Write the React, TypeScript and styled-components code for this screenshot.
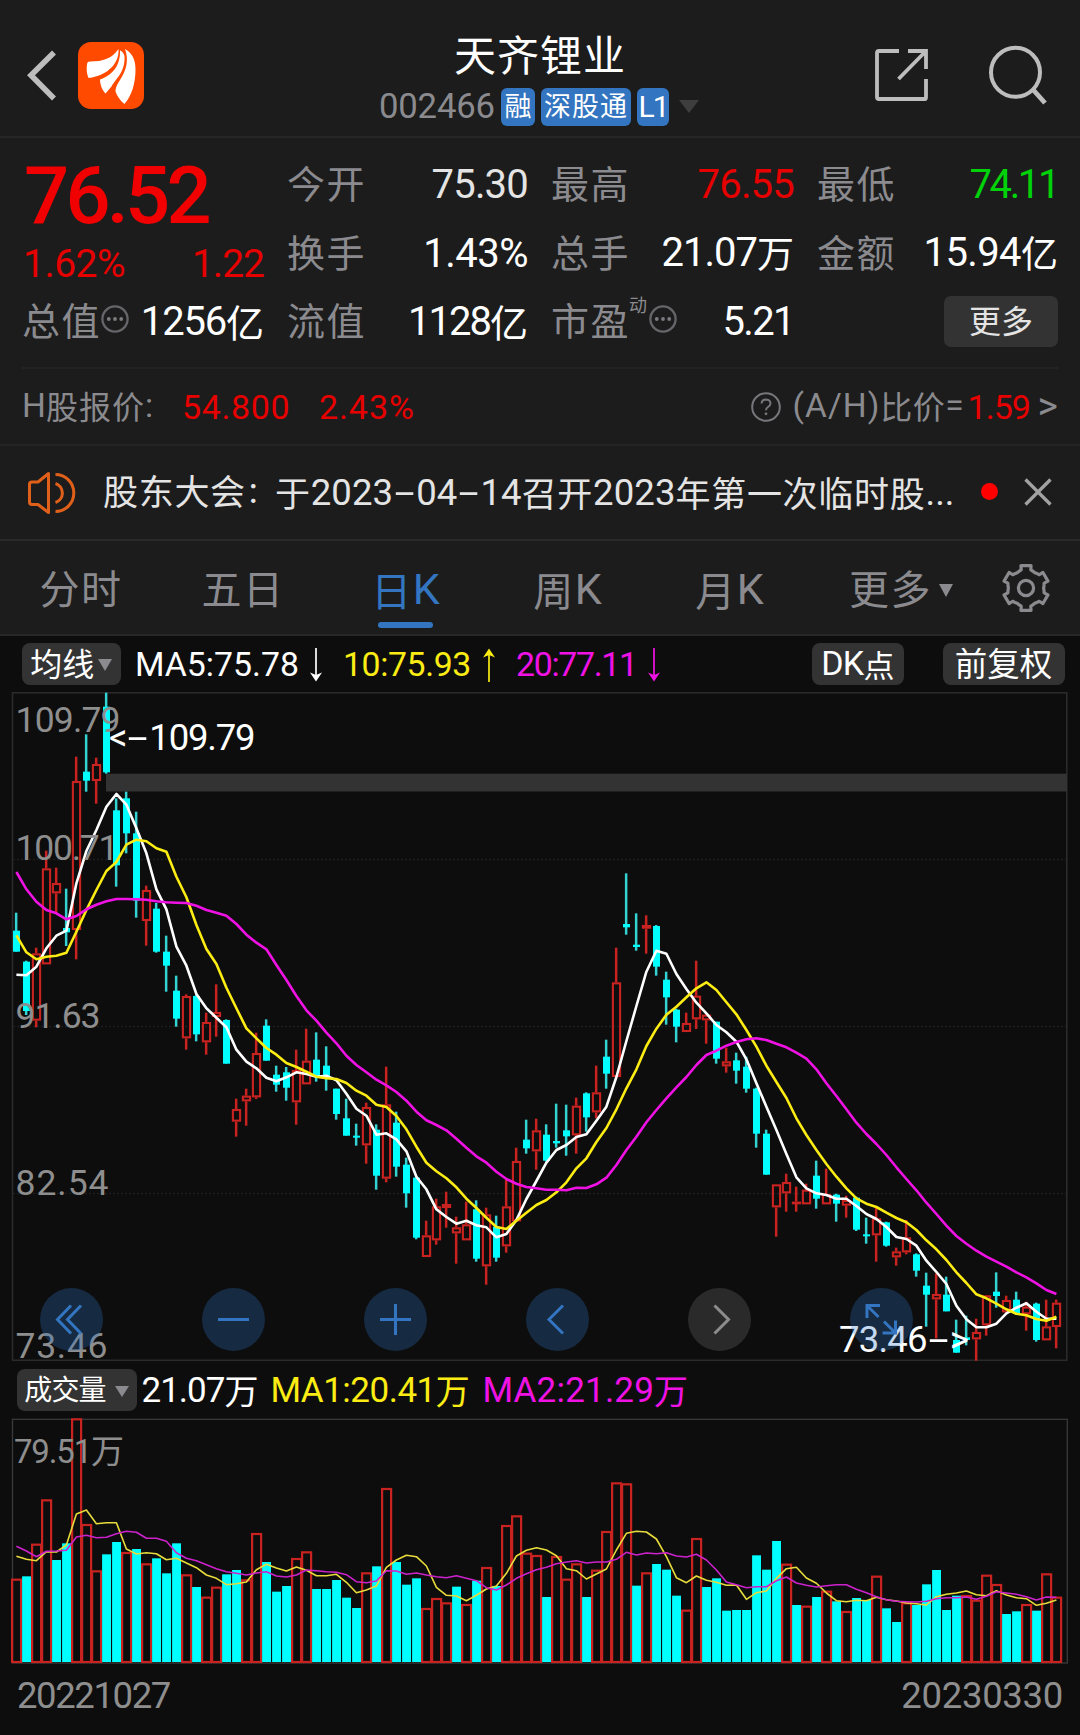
import React from "react";
import styled, { createGlobalStyle } from "styled-components";

const C = {
  panel: "#1c1c1c",
  chart: "#0d0d0d",
  line: "#2b2b2b",
  gray: "#8b8b8f",
  white: "#ffffff",
  soft: "#e4e4e4",
  red: "#e60000",
  green: "#00d20a",
  blue: "#3375c0",
  yellow: "#fbec14",
  magenta: "#f012e4",
  pill: "#333333",
  up: "#c82320",
  cyan: "#00ffff",
  wick: "#35d2d2",
  axis: "#8e8e8e",
};

const Global = createGlobalStyle`
  body { margin: 0; background: ${C.chart}; }
  * { box-sizing: border-box; }
`;

const Screen = styled.div`
  width: 1080px;
  height: 1735px;
  display: flex;
  flex-direction: column;
  background: ${C.chart};
  color: ${C.white};
  font-family: Roboto, "Noto Sans CJK SC", sans-serif;
  line-height: 1;
  overflow: hidden;
  svg { display: block; flex: none; overflow: visible; }
`;

/* ---------- text made of latin and CJK runs ---------- */

const TextBox = styled.span<{ $color?: string; $w?: number; $right?: boolean; $weight?: number; $ml?: number }>`
  display: inline-block;
  flex: none;
  white-space: nowrap;
  color: ${(p) => p.$color || C.gray};
  width: ${(p) => (p.$w ? `${p.$w}px` : "auto")};
  margin-left: ${(p) => p.$ml || 0}px;
  text-align: ${(p) => (p.$right ? "right" : "left")};
  font-weight: ${(p) => p.$weight || 400};
`;
const Run = styled.span<{ $size: number; $ls: number; $drop?: boolean }>`
  font-size: ${(p) => p.$size}px;
  letter-spacing: ${(p) => p.$ls}px;
  vertical-align: ${(p) => (p.$drop ? "-1.5px" : "baseline")};
`;
const Dash = styled.span`
  display: inline-block;
  width: 23px;
  text-align: center;
  transform: scaleX(2);
  letter-spacing: 0;
`;

type TextProps = {
  t: string;
  size?: number;
  ls?: number;
  cjk?: number;
  cls?: number;
  color?: string;
  w?: number;
  ml?: number;
  right?: boolean;
  weight?: number;
};
function Txt({ t, size = 40, ls = -1, cjk = 38, cls = 1.5, color, w, ml, right, weight }: TextProps) {
  const runs = t.match(/[\u3000-\u9fff\uff00-\uffef]+|[^\u3000-\u9fff\uff00-\uffef]+/g) || [];
  return (
    <TextBox $color={color} $w={w} $right={right} $weight={weight} $ml={ml}>
      {runs.map((r, i) => {
        const han = /[\u3000-\u9fff\uff00-\uffef]/.test(r);
        return (
          <Run key={i} $size={han ? cjk : size} $ls={han ? cls : ls} $drop={han}>
            {r.split(/(-)/).map((part, k) => (part === "-" ? <Dash key={k}>-</Dash> : part))}
          </Run>
        );
      })}
    </TextBox>
  );
}

/* ---------- header ---------- */

const Header = styled.header`
  height: 138px;
  flex: none;
  display: grid;
  grid-template-columns: 300px 1fr 300px;
  background: ${C.panel};
  border-bottom: 2px solid #262626;
`;
const HeaderLeft = styled.div`
  display: flex;
  padding: 42px 0 0 26px;
  gap: 22px;
`;
const HeaderRight = styled.div`
  display: flex;
  justify-content: flex-end;
  gap: 57px;
  padding: 45px 32px 0 0;
`;
const TitleCol = styled.div`
  display: flex;
  flex-direction: column;
  align-items: center;
  padding-top: 35.5px;
`;
const CodeRow = styled.div`
  display: flex;
  align-items: center;
  height: 38px;
  margin-top: 10px;
  padding-right: 2px;
`;
const Tag = styled.span<{ $w: number; $ml: number }>`
  width: ${(p) => p.$w}px;
  height: 38px;
  margin-left: ${(p) => p.$ml}px;
  padding-top: 1px;
  display: flex;
  align-items: center;
  justify-content: center;
  border-radius: 6px;
  background: ${C.blue};
`;
const Caret = styled.i<{ $w: number; $h: number; $c: string; $ml?: number }>`
  flex: none;
  margin-left: ${(p) => p.$ml || 0}px;
  border-left: ${(p) => p.$w / 2}px solid transparent;
  border-right: ${(p) => p.$w / 2}px solid transparent;
  border-top: ${(p) => p.$h}px solid ${(p) => p.$c};
`;

/* ---------- quote ---------- */

const Quote = styled.section`
  flex: none;
  height: 229px;
  padding: 12.5px 22px 0 24px;
  display: grid;
  grid-template-columns: 240px 239px 241px 239px;
  column-gap: 25px;
  grid-template-rows: repeat(3, 68.8px);
  background: ${C.panel};
`;
const PriceBlock = styled.div`
  grid-row: span 2;
  display: flex;
  flex-direction: column;
  padding-top: 5px;
`;
const Between = styled.div`
  display: flex;
  justify-content: space-between;
  align-items: center;
`;
const Change = styled(Between)`
  margin-top: 10px;
`;
const LabelGroup = styled.span`
  display: flex;
  align-items: center;
`;
const Sup = styled.span`
  align-self: flex-start;
  margin: -6px 0 0 -1px;
  font-size: 18px;
  color: ${C.gray};
`;
const DotsIcon = styled.svg`
  margin-top: -6px;
`;
const MoreButton = styled.button`
  justify-self: end;
  align-self: center;
  width: 114px;
  height: 51px;
  margin: 0 0 2px 0;
  padding: 2px 0 0;
  border: 0;
  border-radius: 7px;
  background: ${C.pill};
  font-family: inherit;
  line-height: 1;
`;

const HRow = styled.section`
  flex: none;
  height: 77px;
  margin: 0 22px;
  display: flex;
  align-items: center;
  border-top: 2px solid #232323;
`;
const PanelBand = styled.div`
  flex: none;
  background: ${C.panel};
  border-bottom: 2px solid #242424;
`;
const Spacer = styled.span`
  flex: 1;
`;
const Gap = styled.span<{ $w: number }>`
  flex: none;
  width: ${(p) => p.$w}px;
`;

const Notice = styled.section`
  flex: none;
  height: 95px;
  padding: 0 26px;
  display: flex;
  align-items: center;
  background: ${C.panel};
  border-bottom: 2px solid #2a2a2a;
`;
const NoticeText = styled.span`
  display: flex;
  align-items: center;
  padding-top: 2px;
`;
const RedDot = styled.i`
  width: 17px;
  height: 17px;
  margin-top: -2px;
  border-radius: 50%;
  background: #ff0000;
`;

/* ---------- tabs ---------- */

const Tabs = styled.nav`
  flex: none;
  height: 95px;
  display: flex;
  background: ${C.panel};
  border-bottom: 2px solid #272727;
`;
const Tab = styled.div<{ $han?: boolean }>`
  width: 162px;
  flex: none;
  display: flex;
  flex-direction: column;
  align-items: center;
  padding-top: ${(p) => (p.$han ? 29.5 : 26.5)}px;
`;
const TabLine = styled.i`
  width: 55px;
  height: 6px;
  border-radius: 3px;
  margin-top: 9.5px;
  background: ${C.blue};
`;
const TabRow = styled.span`
  display: flex;
  align-items: center;
  margin-left: 20px;
`;
const GearCell = styled.div`
  padding: 21.5px 0 0 29px;
`;

/* ---------- chart legends ---------- */

const Legend = styled.div<{ $h: number; $pl: number; $pt: number }>`
  flex: none;
  height: ${(p) => p.$h}px;
  padding: ${(p) => p.$pt}px 0 0 ${(p) => p.$pl}px;
  display: flex;
  align-items: flex-start;
`;
const Pill = styled.span<{ $w: number; $pt?: number }>`
  flex: none;
  width: ${(p) => p.$w}px;
  height: 42px;
  padding-top: ${(p) => p.$pt ?? 2}px;
  display: flex;
  align-items: center;
  justify-content: center;
  border-radius: 8px;
  background: ${C.pill};
`;
const LegendItem = styled.span<{ $w: number; $ml: number }>`
  flex: none;
  height: 44px;
  width: ${(p) => p.$w}px;
  margin-left: ${(p) => p.$ml}px;
  display: flex;
  align-items: center;
  justify-content: space-between;
`;

const PriceArea = styled.section`
  position: relative;
  flex: none;
  height: 670px;
`;
const Annotation = styled.span<{ $x: number; $y: number }>`
  position: absolute;
  left: ${(p) => p.$x}px;
  top: ${(p) => p.$y}px;
`;
const Controls = styled.div`
  position: absolute;
  left: 40px;
  top: 595.5px;
  display: flex;
  gap: 99px;
`;
const Round = styled.span<{ $off?: boolean }>`
  width: 63px;
  height: 63px;
  border-radius: 50%;
  display: flex;
  align-items: center;
  justify-content: center;
  background: ${(p) => (p.$off ? "rgba(120,120,120,.28)" : "rgba(48,120,200,.28)")};
`;
const Dates = styled.footer`
  flex: none;
  height: 71px;
  padding: 14px 17px 0 17px;
  display: flex;
  justify-content: space-between;
`;

/* ---------- chart data ---------- */

type Candle = [number, number, number, number, number];
const at = (top: number, rows: Candle[]): Candle[] =>
  rows.map(([up, h, o, c, l]) => [up, top + h / 3, top + o / 3, top + c / 3, top + l / 3]);

const candles: Candle[] = [
  ...at(680, [
    [0, 698, 752, 815, 815], [0, 842, 845, 993, 1005], [1, 803, 820, 1022, 1042], [1, 512, 565, 853, 853],
    [1, 563, 609, 640, 700], [0, 626, 744, 757, 798], [1, 230, 303, 750, 838], [0, 163, 275, 302, 335],
    [1, 233, 252, 303, 371], [0, 38, 80, 277, 281], [0, 355, 391, 556, 620], [0, 335, 355, 460, 520],
    [0, 395, 460, 662, 713], [1, 617, 630, 723, 797], [0, 669, 686, 815, 818], [0, 767, 815, 857, 935],
    [0, 887, 932, 1016, 1040], [1, 943, 948, 1075, 1109], [0, 945, 948, 1063, 1084], [1, 998, 1026, 1087, 1124],
    [1, 913, 996, 1011, 1070],
  ]),
  ...at(980, [
    [0, 118, 120, 251, 251], [1, 356, 387, 425, 470], [1, 326, 347, 364, 437], [1, 158, 219, 352, 357],
    [0, 118, 137, 242, 242], [0, 257, 284, 314, 335], [0, 261, 277, 323, 362], [1, 209, 270, 367, 434],
    [1, 146, 242, 313, 313], [0, 157, 239, 288, 305], [0, 199, 257, 292, 332], [0, 326, 326, 402, 419],
    [0, 356, 415, 467, 467], [0, 431, 467, 473, 497], [1, 368, 381, 496, 551], [0, 433, 449, 587, 629],
    [1, 260, 373, 596, 607], [0, 395, 428, 560, 590], [0, 533, 554, 640, 683], [0, 590, 593, 773, 778],
    [1, 722, 766, 831, 831], [1, 656, 679, 781, 794], [1, 635, 672, 684, 743], [1, 710, 742, 760, 851],
    [1, 665, 733, 781, 781], [0, 661, 688, 836, 845], [1, 683, 703, 859, 914], [0, 707, 740, 833, 845],
    [1, 600, 679, 799, 818], [1, 503, 543, 724, 724], [0, 419, 479, 505, 521], [1, 416, 451, 514, 569],
    [0, 433, 464, 542, 545], [0, 371, 483, 490, 503],
  ]),
  ...at(840, [
    [0, 794, 871, 889, 947], [1, 773, 797, 886, 941], [0, 757, 760, 832, 875], [1, 677, 757, 817, 835],
    [0, 599, 650, 701, 746], [1, 323, 427, 711, 711], [0, 100, 252, 262, 284], [0, 220, 314, 321, 332],
    [1, 226, 255, 266, 341], [0, 255, 258, 380, 407], [0, 395, 419, 472, 554], [0, 506, 509, 560, 607],
    [1, 518, 549, 576, 576], [1, 362, 467, 538, 567], [1, 520, 524, 541, 611], [0, 545, 545, 656, 671],
    [1, 623, 664, 679, 698], [0, 638, 661, 692, 731], [0, 650, 680, 746, 758], [0, 743, 746, 881, 923],
    [0, 869, 881, 1004, 1004], [1, 1033, 1033, 1102, 1190], [1, 1001, 1026, 1060, 1115], [1, 1040, 1085, 1090, 1115],
    [1, 1031, 1049, 1093, 1093], [0, 962, 1007, 1076, 1106],
  ]),
  ...at(1080, [
    [1, 266, 342, 373, 373], [0, 341, 344, 371, 425], [1, 347, 360, 377, 413], [0, 350, 353, 449, 453],
    [0, 413, 463, 468, 491], [1, 380, 415, 466, 545], [0, 425, 427, 497, 500], [1, 503, 514, 532, 557],
    [1, 420, 472, 517, 523], [0, 520, 523, 572, 590], [0, 578, 617, 644, 740], [1, 580, 642, 658, 775],
    [0, 590, 644, 694, 694], [0, 719, 780, 818, 818], [0, 707, 772, 780, 796], [1, 716, 756, 778, 842],
    [1, 645, 646, 736, 767], [0, 577, 635, 648, 683], [1, 647, 660, 697, 701], [0, 635, 659, 702, 705],
    [1, 665, 680, 703, 752], [0, 668, 671, 780, 785], [1, 659, 739, 781, 781], [1, 659, 668, 741, 805],
  ]),
];

const span = (top: number, values: number[]) => values.map((v) => top + v / 3);

const ma5 = [
  ...span(680, [884, 886, 860, 805, 767, 752, 610, 513, 450, 380, 342, 374, 445, 520, 628, 688, 800, 857, 942, 985, 1013, 1042, 1109, 1145, 1165]),
  ...span(980, [293, 304, 292, 277, 282, 290, 287, 301, 341, 386, 407, 464, 460, 478, 514, 590, 628, 688, 711, 731, 722, 736, 742, 772, 762, 720, 657, 603, 548]),
  ...span(840, [930, 915, 891, 883, 842, 800, 711, 603, 498, 395, 332, 341, 402, 447, 488, 520, 555, 577, 605, 658, 730, 800, 870]),
  ...span(1080, [222, 292, 325, 340, 345, 356, 356, 378, 402, 417, 441, 471, 477, 497, 542, 576, 612, 677, 718, 742, 742, 731, 700, 683, 670, 695, 716, 716]),
];
const ma10 = [
  ...span(680, [766, 817, 838, 830, 827, 818, 755, 690, 630, 573, 546, 494, 479, 484, 505, 515, 590, 652, 735, 807, 852, 923, 985, 1045, 1075]),
  ...span(980, [204, 224, 249, 261, 275, 290, 295, 297, 309, 332, 347, 374, 381, 408, 448, 500, 548, 574, 595, 622, 656, 684, 713, 741, 747, 722, 698, 675, 660]),
  ...span(840, [1057, 1027, 985, 955, 906, 864, 808, 745, 688, 618, 566, 524, 500, 472, 445, 427, 450, 487, 523, 570, 620, 677, 726]),
  ...span(1080, [54, 115, 165, 210, 252, 290, 325, 355, 371, 381, 398, 414, 427, 450, 481, 508, 540, 577, 609, 643, 655, 671, 688, 701, 706, 717, 722, 710]),
];
const ma20 = [
  ...span(680, [576, 628, 665, 690, 700, 718, 708, 688, 674, 664, 657, 657, 658, 659, 664, 667, 668, 669, 677, 690, 698, 707, 732, 764, 788, 808, 855]),
  ...span(980, [0, 48, 91, 122, 158, 190, 227, 255, 277, 299, 316, 336, 362, 395, 421, 435, 451, 476, 503, 529, 548, 575, 597, 611, 621, 625, 629]),
  ...span(840, [1049, 1051, 1043, 1044, 1033, 1013, 975, 930, 890, 847, 810, 775, 742, 711, 675, 645, 632, 617, 606, 598, 595, 600, 611, 622, 638, 656, 688]),
  ...span(1080, [10, 48, 88, 128, 162, 192, 225, 262, 297, 331, 368, 402, 437, 468, 491, 512, 530, 545, 560, 577, 592, 610, 630, 642]),
];

const volumes =
  "r659 c649 r554 r421 c600 c550 r178 r495 r634 c583 c546 r579 c567 r613 c595 c640 c550 r646 c681 r713 r683 c643 c630 r661 r522 c606 c695 c678 r597 r577 c687 c687 c660 c713 c744 r640 c619 r387 c606 c674 c655 r747 r717 r730 c680 r735 c662 r624 c678 r498 r469 r581 r588 c711 r591 r659 r613 c711 r632 r516 r370 r373 c677 r640 c612 c629 c707 r752 r537 c681 c655 c752 c750 c750 c586 c629 c543 r614 c735 r740 c711 r695 c724 r756 c714 c720 r650 c745 c786 r730 c735 c673 c630 c750 c707 r708 r722 r647 r675 c762 c754 r735 c752 r643 r713"
    .split(" ")
    .map((s) => ({ up: s[0] === "r", y: 1360 + Number(s.slice(1)) / 3 }));
const vma1 = span(1360, [
  589, 598, 602, 575, 576, 555, 462, 450, 491, 488, 488, 567, 582, 578, 581, 599, 595, 609, 623, 645, 655, 674, 671, 666, 629, 613, 624, 633, 621, 631, 647, 647, 643, 667, 698, 690, 678, 622, 600, 586, 590, 618, 682, 706, 708, 722, 706, 687, 678, 640, 588, 571, 563,
  570, 587, 626, 632, 657, 642, 627, 570, 520, 514, 516, 537, 590, 653, 668, 648, 661, 667, 676, 675, 718, 698, 693, 655, 626, 622, 654, 670, 699, 722, 725, 721, 722, 712, 719, 723, 729, 731, 735, 710, 703, 699, 693, 704, 707, 692, 705, 713, 716, 736, 730, 720,
]);
const vma2 = span(1360, [
  559, 573, 590, 574, 573, 571, 531, 526, 533, 532, 521, 514, 517, 535, 535, 544, 578, 595, 602, 614, 626, 635, 640, 645, 639, 635, 648, 651, 645, 630, 632, 635, 637, 644, 665, 668, 663, 632, 633, 643, 639, 645, 650, 653, 647, 655, 662, 683, 690, 675, 655, 641, 629,
  622, 611, 606, 602, 609, 606, 606, 598, 577, 585, 579, 581, 578, 588, 591, 583, 600, 630, 666, 674, 683, 680, 680, 662, 651, 669, 676, 681, 677, 674, 674, 688, 698, 710, 719, 724, 725, 726, 724, 716, 713, 713, 711, 718, 709, 695, 699, 703, 710, 720, 711, 712,
]);

const x = (i: number) => 16.2 + i * 10;
const toPoints = (ys: number[]) => ys.map((y, i) => `${x(i) + 0.2},${y.toFixed(1)}`).join(" ");

function CandleShape({ d, i }: { d: Candle; i: number }) {
  const [up, h, o, c, l] = d;
  const cx = x(i) - 0.2;
  if (!up) {
    return (
      <g>
        <rect x={cx - 1.1} y={h} width={2.5} height={Math.max(l - h, 1)} fill={C.wick} />
        <rect x={cx - 3} y={o} width={7} height={Math.max(c - o, 2)} fill={C.cyan} />
      </g>
    );
  }
  return (
    <g fill={C.up}>
      <rect x={cx - 1.1} y={h} width={2.5} height={Math.max(o - h, 0)} />
      <rect x={cx - 1.1} y={c} width={2.5} height={Math.max(l - c, 0)} />
      <rect x={cx - 3.1} y={o + 1} width={7.2} height={Math.max(c - o - 2, 0.6)} fill="none" stroke={C.up} strokeWidth={2.1} />
    </g>
  );
}

type ChartLabelProps = { x: number; y: number; w: number; size?: number; fill?: string; children: string };
const ChartLabel = ({ x, y, w, size = 35.5, fill = C.axis, children }: ChartLabelProps) => (
  <text x={x} y={y} fontSize={size} fill={fill} textLength={w} lengthAdjust="spacing">
    {children}
  </text>
);

function PriceChart() {
  return (
    <svg width="1080" height="670" viewBox="0 692 1080 670">
      <rect x="12.5" y="692.8" width="1054.3" height="667.5" fill="none" stroke="#2a2a2a" strokeWidth="1.6" />
      {[859.5, 1026.5, 1193.5].map((y) => (
        <line key={y} x1="13" x2="1066" y1={y} y2={y} stroke="#1f1f1f" strokeWidth="1.4" strokeDasharray="2 2" />
      ))}
      <rect x="106" y="773.7" width="961" height="17.8" fill="#333" />
      {candles.map((d, i) => (
        <CandleShape key={i} d={d} i={i} />
      ))}
      <g fill="none" strokeWidth="2.6" strokeLinejoin="round">
        <polyline points={toPoints(ma5)} stroke="#fff" />
        <polyline points={toPoints(ma10)} stroke={C.yellow} />
        <polyline points={toPoints(ma20)} stroke={C.magenta} />
      </g>
      <ChartLabel x={15.5} y={731.7} w={105}>109.79</ChartLabel>
      <ChartLabel x={15.5} y={859.5} w={103}>100.71</ChartLabel>
      <ChartLabel x={15.5} y={1027.5} w={85}>91.63</ChartLabel>
      <ChartLabel x={15.5} y={1194.5} w={93}>82.54</ChartLabel>
      <ChartLabel x={15.5} y={1357.7} w={92}>73.46</ChartLabel>
    </svg>
  );
}

function VolumeChart() {
  return (
    <svg width="1080" height="246" viewBox="0 1418 1080 246">
      <rect x="12.5" y="1419.3" width="1054.8" height="243.7" fill="none" stroke="#3a3a3a" strokeWidth="1.3" />
      {volumes.map((v, i) =>
        v.up ? (
          <rect key={i} x={x(i) - 4.1} y={v.y} width={9} height={1662 - v.y} fill="none" stroke={C.up} strokeWidth={2.2} />
        ) : (
          <rect key={i} x={x(i) - 4.1} y={v.y} width={8.9} height={1662 - v.y} fill={C.cyan} />
        )
      )}
      <g fill="none" strokeWidth="1.6" strokeLinejoin="round">
        <polyline points={toPoints(vma1)} stroke="#e8dc3c" />
        <polyline points={toPoints(vma2)} stroke="#cc22cc" />
      </g>
      <ChartLabel x={14} y={1463.2} w={110} size={33}>79.51万</ChartLabel>
    </svg>
  );
}

/* ---------- icons ---------- */

const Dots = () => (
  <DotsIcon width="28" height="28" viewBox="0 0 28 28">
    <circle cx="14" cy="14" r="12.6" fill="none" stroke="#66666a" strokeWidth="2.3" />
    <g fill="#7c7c80">
      <circle cx="7.8" cy="14" r="1.9" />
      <circle cx="14" cy="14" r="1.9" />
      <circle cx="20.2" cy="14" r="1.9" />
    </g>
  </DotsIcon>
);

const gearPath = (() => {
  const teeth = 6;
  const at = (a: number, r: number) => `${(25 + r * Math.cos(a)).toFixed(2)} ${(25 + r * Math.sin(a)).toFixed(2)}`;
  let d = "";
  for (let k = 0; k < teeth; k++) {
    const a = (k * 2 * Math.PI) / teeth - Math.PI / 2;
    d += `${k ? "L" : "M"}${at(a - 0.26, 18.8)}L${at(a - 0.22, 23)}L${at(a + 0.22, 23)}L${at(a + 0.26, 18.8)}`;
    d += `L${at(a + 0.38, 18.2)}L${at(a + 0.523, 17.6)}L${at(a + 0.66, 18.2)}`;
  }
  return d + "Z";
})();

const Arrow = ({ up, color }: { up?: boolean; color: string }) => (
  <svg width="14" height="36" viewBox="0 0 14 36">
    <g transform={up ? "rotate(180 7 18)" : undefined}>
      <path d="M7 1V33" stroke={color} strokeWidth="1.7" />
      <path d="M1 25.5L7 28L13 25.5L7 34.5Z" fill={color} />
    </g>
  </svg>
);

const Stroke = ({ d, color = C.blue, w = 3 }: { d: string; color?: string; w?: number }) => (
  <svg width="63" height="63" viewBox="0 0 63 63">
    <path d={d} fill="none" stroke={color} strokeWidth={w} />
  </svg>
);

export default function App() {
  const ma = { size: 33.8 };
  const vol = { size: 35, cjk: 34, cls: 0 };
  return (
    <Screen>
      <Global />
      <Header>
        <HeaderLeft>
          <svg width="30" height="67" viewBox="0 0 30 67">
            <path d="M28 10.5L5 33.3L28 56.5" fill="none" stroke="#bdbdbd" strokeWidth="5.6" />
          </svg>
          <svg width="66" height="67" viewBox="0 0 66 67">
            <rect width="66" height="67" rx="13" fill="#ff4a00" />
            <g fill="#fff">
              <path d="M9 22.5C9 20.5 10 19.5 12 19.5C25 19.5 34 16.5 40.5 7C41.5 20 31 33.5 10.5 36C8.7 31.5 8.3 27 9 22.5Z" />
              <path d="M42 8.5C44.5 9.5 45.5 11 46.5 14C47.5 30 37.5 37 33.5 44.5L27.5 51.5C24.5 48.5 22 43 22 37.5C33.5 33.5 42.5 24.5 42 8.5Z" />
              <path d="M47 7C53.5 10.5 57.5 17 57.5 27C57.5 42 53.5 54 46.5 62C42.5 59 39 54 37.5 49.5C37.5 45.5 39 43 42 38C48.5 28 51 18 47 7Z" />
            </g>
          </svg>
        </HeaderLeft>
        <TitleCol>
          <Txt t="天齐锂业" cjk={42} cls={1} color={C.white} />
          <CodeRow>
            <Txt t="002466" size={34.7} ls={-0.2} w={120} />
            <Tag $w={34} $ml={2}>
              <Txt t="融" cjk={27} cls={0} color="#fff" />
            </Tag>
            <Tag $w={90} $ml={6}>
              <Txt t="深股通" cjk={27} cls={1} color="#fff" />
            </Tag>
            <Tag $w={32} $ml={6}>
              <Txt t="L1" size={30} ls={-2} color="#fff" />
            </Tag>
            <Caret $w={20} $h={13} $c="#3e3e3e" $ml={10} />
          </CodeRow>
        </TitleCol>
        <HeaderRight>
          <svg width="60" height="60" viewBox="0 0 60 60">
            <path d="M28 6H8Q6 6 6 8V52Q6 54 8 54H54Q55 54 55 52V34M37 6H55V24M54 7L27.5 34" fill="none" stroke="#bdbdbd" strokeWidth="3.8" />
          </svg>
          <svg width="60" height="60" viewBox="0 0 60 60">
            <circle cx="27.5" cy="27.3" r="24.5" fill="none" stroke="#bdbdbd" strokeWidth="4" />
            <path d="M44 43.5L57 58" stroke="#bdbdbd" strokeWidth="4.8" />
          </svg>
        </HeaderRight>
      </Header>

      <Quote>
        <PriceBlock>
          <Txt t="76.52" size={79.5} ls={-3.8} color="#f00000" weight={500} />
          <Change>
            <Txt t="1.62%" size={39} ls={-0.5} ml={-1} color={C.red} />
            <Txt t="1.22" size={39} color={C.red} />
          </Change>
        </PriceBlock>
        <Between>
          <Txt t="今开" ml={-2} />
          <Txt t="75.30" color={C.soft} ls={-0.8} />
        </Between>
        <Between>
          <Txt t="最高" ml={-2} />
          <Txt t="76.55" color={C.red} ls={-0.8} />
        </Between>
        <Between>
          <Txt t="最低" ml={-2} />
          <Txt t="74.11" color={C.green} ls={-2.4} />
        </Between>
        <Between>
          <Txt t="换手" ml={-2} />
          <Txt t="1.43%" color={C.white} ls={-0.5} />
        </Between>
        <Between>
          <Txt t="总手" ml={-2} />
          <Txt t="21.07万" cls={0} cjk={37} color={C.white} />
        </Between>
        <Between>
          <Txt t="金额" ml={-2} />
          <Txt t="15.94亿" cls={0} cjk={37} ls={-0.6} color={C.white} />
        </Between>
        <Between>
          <LabelGroup>
            <Txt t="总值" ml={-2} />
            <Dots />
          </LabelGroup>
          <Txt t="1256亿" cls={0} cjk={38} ls={-1.2} color={C.white} />
        </Between>
        <Between>
          <Txt t="流值" ml={-2} />
          <Txt t="1128亿" cls={0} cjk={38} ls={-2} color={C.white} />
        </Between>
        <Between>
          <LabelGroup>
            <Txt t="市盈" ml={-2} />
            <Sup>动</Sup>
            <Gap $w={2} />
            <Dots />
          </LabelGroup>
          <Txt t="5.21" color={C.white} ls={-1.6} />
        </Between>
        <MoreButton>
          <Txt t="更多" cjk={32} cls={0} color={C.soft} />
        </MoreButton>
      </Quote>

      <PanelBand>
        <HRow>
          <Txt t="H股报价:" size={33.5} ls={0} cjk={32} cls={1} w={160} />
          <Txt t="54.800" size={34} ls={0.6} color={C.red} w={137} />
          <Txt t="2.43%" size={34} ls={0.9} color={C.red} />
          <Spacer />
          <svg width="30" height="30" viewBox="0 0 30 30">
            <circle cx="15" cy="15" r="13.8" fill="none" stroke="#77777b" strokeWidth="2" />
            <path d="M10.5 11.5Q11 7.5 15 7.5Q19.5 7.8 19.5 11.5Q19.3 13.6 17 15Q15 16.3 15 18.3" fill="none" stroke="#77777b" strokeWidth="2" />
            <circle cx="15" cy="21.8" r="1.4" fill="#77777b" />
          </svg>
          <Gap $w={12} />
          <Txt t="(A/H)比价=" size={33.5} ls={1} cjk={32} cls={0.5} w={175} />
          <Txt t="1.59" size={34} ls={-1} color={C.red} w={70} />
          <Txt t=">" size={39} ls={0} />
        </HRow>
      </PanelBand>

      <Notice>
        <svg width="50" height="44" viewBox="0 0 50 44">
          <g fill="none" stroke="#e0601a" strokeWidth="3">
            <path d="M22.5 2.5V41.5L12 33.5H6Q3.5 33.5 3.5 31V13.5Q3.5 11 6 11H12Z" strokeLinejoin="round" />
            <path d="M29.5 12.5A10 10 0 0 1 29.5 31.5" />
            <path d="M29.5 3.5A18.3 18.5 0 0 1 29.5 40.5" />
          </g>
        </svg>
        <Gap $w={27} />
        <NoticeText>
          <Txt t="股东大会" cjk={35} cls={0.7} color={C.soft} w={143} />
          <Txt t="：" cjk={29} cls={0} color={C.soft} w={29} />
          <Txt t="于2023-04-14召开2023年第一次临时股..." size={36.5} ls={0.1} cjk={35} cls={0.7} color={C.soft} w={685} />
        </NoticeText>
        <Gap $w={21} />
        <RedDot />
        <Spacer />
        <svg width="32" height="34" viewBox="0 0 32 34">
          <path d="M3.5 3.5L28.5 28.5M28.5 3.5L3.5 28.5" stroke="#a2a2a2" strokeWidth="3.2" />
        </svg>
      </Notice>

      <Tabs>
        <Tab $han>
          <Txt t="分时" cjk={40} />
        </Tab>
        <Tab $han>
          <Txt t="五日" cjk={40} />
        </Tab>
        <Tab>
          <Txt t="日K" cjk={40} size={43} color={C.blue} />
          <TabLine />
        </Tab>
        <Tab>
          <Txt t="周K" cjk={40} size={43} />
        </Tab>
        <Tab>
          <Txt t="月K" cjk={40} size={43} />
        </Tab>
        <Tab $han>
          <TabRow>
            <Txt t="更多" cjk={40} />
            <Caret $w={15} $h={13} $c={C.gray} $ml={7} />
          </TabRow>
        </Tab>
        <GearCell>
          <svg width="50" height="50" viewBox="0 0 50 50">
            <path d={gearPath} fill="none" stroke={C.gray} strokeWidth="3.2" strokeLinejoin="round" />
            <circle cx="25" cy="25" r="7.6" fill="none" stroke={C.gray} strokeWidth="3.2" />
          </svg>
        </GearCell>
      </Tabs>

      <Legend $h={56} $pl={21.5} $pt={7}>
        <Pill $w={99.5}>
          <Txt t="均线" cjk={32} cls={0} color="#fff" />
          <Caret $w={14} $h={12} $c="#8b8b8f" $ml={4} />
        </Pill>
        <LegendItem $w={188} $ml={14}>
          <Txt t="MA5:75.78" {...ma} ls={0} color="#fff" />
          <Arrow color="#fff" />
        </LegendItem>
        <LegendItem $w={153} $ml={20}>
          <Txt t="10:75.93" {...ma} ls={-0.4} color={C.yellow} />
          <Arrow up color={C.yellow} />
        </LegendItem>
        <LegendItem $w={145} $ml={20}>
          <Txt t="20:77.11" {...ma} ls={-1.3} color={C.magenta} />
          <Arrow color={C.magenta} />
        </LegendItem>
        <Gap $w={151} />
        <Pill $w={91.5} $pt={0}>
          <Txt t="DK点" size={34} ls={-0.7} cjk={31} cls={0} color="#fff" />
        </Pill>
        <Gap $w={39} />
        <Pill $w={122}>
          <Txt t="前复权" cjk={32.5} cls={0} color="#fff" />
        </Pill>
      </Legend>

      <PriceArea>
        <PriceChart />
        <Annotation $x={109} $y={28}>
          <Txt t="<-109.79" size={36.5} ls={-1.2} color="#fff" />
        </Annotation>
        <Annotation $x={839} $y={629.5}>
          <Txt t="73.46->" size={36.5} ls={-0.8} color="#fff" />
        </Annotation>
        <Controls>
          <Round>
            <Stroke d="M31 17.5L17.5 31.5L31 45.5M41 17.5L27.5 31.5L41 45.5" />
          </Round>
          <Round>
            <Stroke d="M16 31.5H47" />
          </Round>
          <Round>
            <Stroke d="M16 31.5H47M31.5 16V47" />
          </Round>
          <Round>
            <Stroke d="M37 17.5L23 31.5L37 45.5" />
          </Round>
          <Round $off>
            <Stroke d="M26.5 17.5L40.5 31.5L26.5 45.5" color="#8c8c8c" />
          </Round>
          <Round>
            <Stroke d="M17 30V17.5H30M17.5 18L28.5 29M45.5 32.5V45H32.5M45 44.5L34 33.5" />
          </Round>
        </Controls>
      </PriceArea>

      <Legend $h={56} $pl={16.5} $pt={7}>
        <Pill $w={120}>
          <Txt t="成交量" cjk={28} cls={-0.8} color="#fff" />
          <Caret $w={14} $h={11} $c="#8b8b8f" $ml={9} />
        </Pill>
        <LegendItem $w={118} $ml={5}>
          <Txt t="21.07万" {...vol} ls={-1} color="#fff" />
        </LegendItem>
        <LegendItem $w={200} $ml={11}>
          <Txt t="MA1:20.41万" {...vol} ls={-0.5} color={C.yellow} />
        </LegendItem>
        <LegendItem $w={210} $ml={12}>
          <Txt t="MA2:21.29万" {...vol} ls={0.2} color={C.magenta} />
        </LegendItem>
      </Legend>

      <VolumeChart />

      <Dates>
        <Txt t="20221027" size={36.5} ls={-1.4} color={C.axis} />
        <Txt t="20230330" size={36.5} ls={-0.3} color={C.axis} />
      </Dates>
    </Screen>
  );
}
